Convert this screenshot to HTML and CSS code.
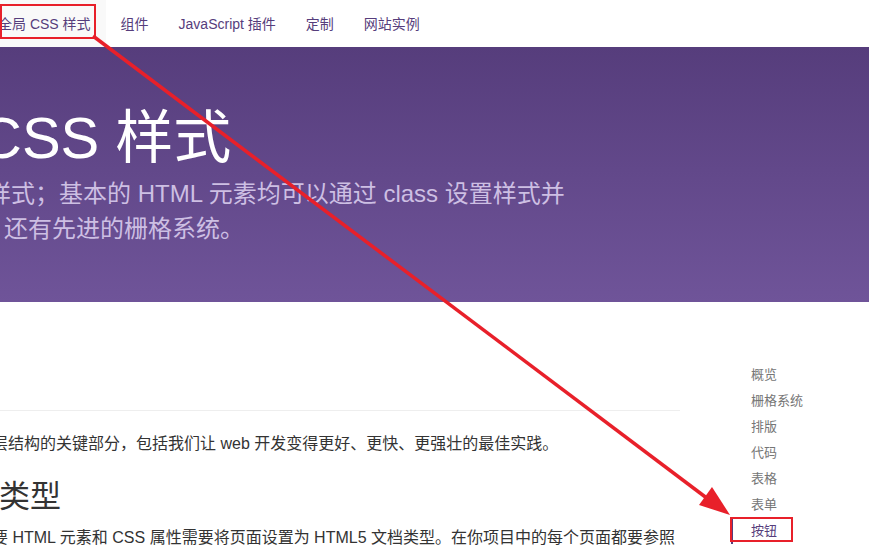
FILE: index.html
```html
<!DOCTYPE html>
<html lang="zh-CN">
<head>
<meta charset="utf-8">
<title>全局 CSS 样式</title>
<link rel="stylesheet" href="styles.css">
</head>
<body>
<nav class="topnav">
  <ul class="navlist">
    <li class="navitem active"><a href="#">全局 CSS 样式</a></li>
    <li class="navitem"><a href="#">组件</a></li>
    <li class="navitem"><a href="#">JavaScript 插件</a></li>
    <li class="navitem"><a href="#">定制</a></li>
    <li class="navitem"><a href="#">网站实例</a></li>
  </ul>
</nav>
<header class="hero">
  <h1 class="hero-title">CSS 样式</h1>
  <p class="hero-lead"><span class="line l1">样式；基本的 HTML 元素均可以通过 class 设置样式并</span><span class="line l2">；还有先进的栅格系统。</span></p>
</header>
<div class="main">
  <div class="content">
    <div class="ad-space"></div>
    <hr class="rule">
    <p class="lead">层结构的关键部分，包括我们让 web 开发变得更好、更快、更强壮的最佳实践。</p>
    <h2 class="sec-title">类型</h2>
    <p class="body-text">要 HTML 元素和 CSS 属性需要将页面设置为 HTML5 文档类型。在你项目中的每个页面都要参照</p>
  </div>
  <aside class="sidebar">
    <ul class="sidenav">
      <li class="sideitem">概览</li>
      <li class="sideitem">栅格系统</li>
      <li class="sideitem">排版</li>
      <li class="sideitem">代码</li>
      <li class="sideitem">表格</li>
      <li class="sideitem">表单</li>
      <li class="sideitem current">按钮</li>
    </ul>
  </aside>
</div>
<svg class="annot" width="869" height="549" viewBox="0 0 869 549">
  <rect x="1" y="5" width="94" height="33" fill="none" stroke="#e8202a" stroke-width="2"/>
  <rect x="731" y="518" width="61" height="23" fill="none" stroke="#e8202a" stroke-width="2"/>
  <line x1="93" y1="36" x2="712" y2="502" stroke="#e8202a" stroke-width="3.5"/>
  <polygon points="730,515 699,505 712,487" fill="#e8202a"/>
</svg>
</body>
</html>
```
FILE: styles.css
```css
html, body {
  margin: 0;
  padding: 0;
}
body {
  width: 869px;
  height: 549px;
  overflow: hidden;
  position: relative;
  background: #fff;
  font-family: "Liberation Sans", "Noto Sans CJK SC", sans-serif;
  color: #333;
}
.topnav {
  height: 47px;
  background: #fff;
}
.navlist {
  list-style: none;
  margin: 0 0 0 -17px;
  padding: 0;
  display: flex;
  height: 47px;
}
.navitem {
  display: flex;
}
.navitem a {
  display: flex;
  align-items: center;
  padding: 0 15px 2px;
  font-size: 14px;
  color: #563d7c;
  text-decoration: none;
}
.navitem.active a {
  background: #f9f9f9;
}
.hero {
  height: 255px;
  background: linear-gradient(to bottom, #563d7c 0%, #6f5499 100%);
  box-sizing: border-box;
  padding-top: 58px;
  color: #fff;
}
.hero-title {
  margin: 0 0 0 -20px;
  font-size: 58px;
  font-weight: 400;
  line-height: 66px;
  white-space: nowrap;
}
.hero-lead {
  margin: 5px 0 0;
  font-size: 24px;
  line-height: 35px;
  color: #cdbfe3;
}
.line {
  display: block;
  white-space: nowrap;
}
.l1 { margin-left: -13px; }
.l2 { margin-left: -20px; }
.main {
  display: flex;
}
.content {
  width: 680px;
}
.ad-space {
  height: 108px;
}
.rule {
  margin: 0;
  border: 0;
  border-top: 1px solid #eee;
}
.lead {
  margin: 22px 0 0 -8px;
  font-size: 16px;
  line-height: 22px;
  white-space: nowrap;
}
.sec-title {
  margin: 22px 0 0 -1px;
  font-size: 31px;
  font-weight: 400;
  line-height: 40px;
}
.body-text {
  margin: 10px 0 0 -8px;
  font-size: 16px;
  line-height: 22px;
  white-space: nowrap;
}
.sidebar {
  margin-left: 51px;
  padding-top: 60px;
}
.sidenav {
  list-style: none;
  margin: 0;
  padding: 0;
}
.sideitem {
  font-size: 13px;
  line-height: 26px;
  color: #767676;
  padding-left: 20px;
}
.sideitem.current {
  color: #563d7c;
  border-left: 2px solid #563d7c;
  padding-left: 18px;
}
.annot {
  position: absolute;
  left: 0;
  top: 0;
  pointer-events: none;
}
```
